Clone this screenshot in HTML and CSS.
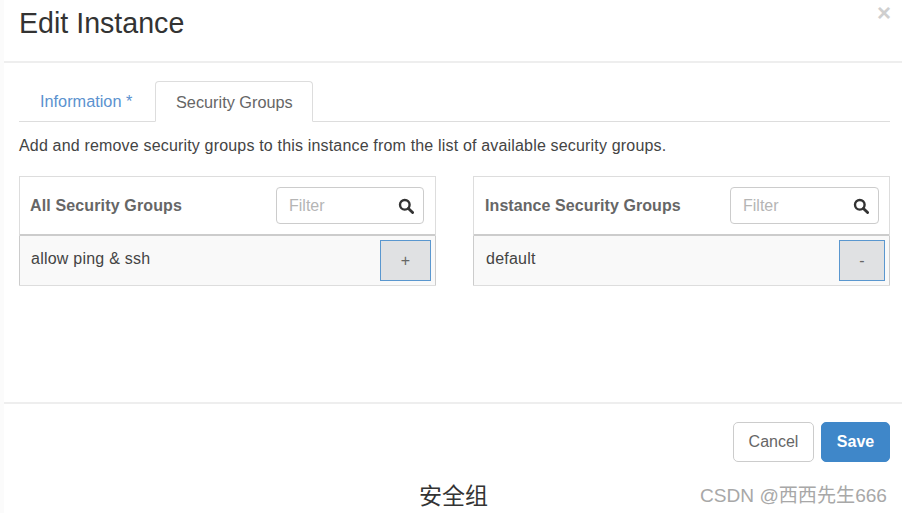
FILE: index.html
```html
<!DOCTYPE html>
<html lang="en">
<head>
<meta charset="utf-8">
<title>Edit Instance</title>
<link rel="stylesheet" href="styles.css">
</head>
<body>
<div class="modal">
  <header class="modal-header">
    <h1 class="title">Edit Instance</h1>
    <span class="close">×</span>
  </header>
  <div class="modal-body">
    <nav class="tabs">
      <a class="tab">Information *</a>
      <a class="tab tab-active">Security Groups</a>
    </nav>
    <p class="help">Add and remove security groups to this instance from the list of available security groups.</p>
    <div class="panels">
      <section class="panel panel-all">
        <div class="panel-head">
          <span class="panel-title">All Security Groups</span>
          <div class="filter">
            <span class="filter-text">Filter</span>
            <svg class="search" viewBox="0 0 16 16" width="16" height="16"><circle cx="6.8" cy="6.8" r="4.8" fill="none" stroke="#333" stroke-width="2.4"/><path d="M10.4 10.4 L14.6 14.6" stroke="#333" stroke-width="2.8" stroke-linecap="round"/></svg>
          </div>
        </div>
        <div class="panel-row">
          <span class="row-label">allow ping &amp; ssh</span>
          <span class="row-btn row-btn-add">+</span>
        </div>
      </section>
      <section class="panel panel-instance">
        <div class="panel-head">
          <span class="panel-title">Instance Security Groups</span>
          <div class="filter">
            <span class="filter-text">Filter</span>
            <svg class="search" viewBox="0 0 16 16" width="16" height="16"><circle cx="6.8" cy="6.8" r="4.8" fill="none" stroke="#333" stroke-width="2.4"/><path d="M10.4 10.4 L14.6 14.6" stroke="#333" stroke-width="2.8" stroke-linecap="round"/></svg>
          </div>
        </div>
        <div class="panel-row">
          <span class="row-label">default</span>
          <span class="row-btn row-btn-remove">-</span>
        </div>
      </section>
    </div>
  </div>
  <footer class="modal-footer">
    <button class="btn btn-cancel">Cancel</button>
    <button class="btn btn-save">Save</button>
  </footer>
</div>
<div class="caption-bar">
  <span class="caption">安全组</span>
  <span class="watermark">CSDN @西西先生666</span>
</div>
</body>
</html>
```
FILE: styles.css
```css
* { box-sizing: border-box; }
html, body { margin: 0; padding: 0; }
body {
  width: 902px;
  height: 513px;
  overflow: hidden;
  background: #fbfbfb;
  font-family: "Liberation Sans", Arial, "Noto Sans CJK SC", sans-serif;
  color: #333;
  display: flex;
  flex-direction: column;
}
.modal {
  height: 463px;
  margin-left: 4px;
  background: #fff;
  display: flex;
  flex-direction: column;
}
.modal-header {
  height: 63px;
  flex: none;
  border-bottom: 2px solid #eee;
  display: flex;
  justify-content: space-between;
  align-items: flex-start;
  padding: 5px 11px 0 15px;
}
.title {
  margin: 0;
  font-size: 28.6px;
  font-weight: 400;
  line-height: 36px;
  color: #333;
}
.close {
  font-size: 24px;
  font-weight: 700;
  line-height: 16px;
  color: #cfcfcf;
}
.modal-body {
  flex: 1;
  padding: 18px 12px 0 15px;
}
.tabs {
  display: flex;
  height: 41px;
  border-bottom: 1px solid #ddd;
}
.tab {
  font-size: 16.3px;
  line-height: 20px;
  padding: 10px 0 0 21px;
  width: 136px;
  color: #5b92cf;
}
.tab-active {
  width: 158px;
  height: 41px;
  padding-left: 20px;
  color: #666;
  background: #fff;
  border: 1px solid #ddd;
  border-bottom-color: #fff;
  border-radius: 4px 4px 0 0;
}
.help {
  margin: 14px 0 0;
  font-size: 16px;
  line-height: 19px;
  letter-spacing: 0.175px;
  color: #444;
}
.panels {
  margin-top: 21px;
  display: flex;
  gap: 37px;
}
.panel {
  width: 417px;
  height: 110px;
  border: 1px solid #ddd;
  display: flex;
  flex-direction: column;
}
.panel-head {
  height: 59px;
  flex: none;
  border-bottom: 2px solid #ccc;
  display: flex;
  justify-content: space-between;
  align-items: center;
  padding: 0 11px 0 10px;
}
.panel-instance .panel-head {
  padding: 0 10px 0 11px;
}
.panel-title {
  font-size: 16px;
  font-weight: 700;
  letter-spacing: 0.14px;
  color: #666;
}
.panel-instance .panel-title {
  letter-spacing: 0.08px;
}
.filter {
  width: 149px;
  height: 37px;
  border: 1px solid #ccc;
  border-radius: 4px;
  display: flex;
  justify-content: space-between;
  align-items: center;
  padding: 0 9px 0 12px;
}
.panel-all .filter {
  width: 148px;
}
.filter-text {
  font-size: 16px;
  color: #b5b5b5;
}
.search { flex: none; margin-top: 1px; }
.panel-row {
  flex: 1;
  margin: 0 -1px;
  background: #f9f9f9;
  border-left: 1px solid #ccc;
  border-right: 1px solid #ccc;
  display: flex;
  justify-content: space-between;
  align-items: center;
  padding: 0 4px 0 11px;
}
.panel-instance .panel-row {
  padding-left: 12px;
}
.row-label {
  font-size: 16px;
  letter-spacing: 0.23px;
  color: #444;
  margin-top: -3px;
}
.row-btn {
  height: 41px;
  background: #e0e1e3;
  border: 1px solid #5a97cf;
  color: #666;
  font-size: 16px;
  display: flex;
  justify-content: center;
  align-items: center;
}
.row-btn-add { width: 51px; }
.row-btn-remove { width: 46px; }
.modal-footer {
  height: 61px;
  flex: none;
  border-top: 2px solid #eee;
  display: flex;
  justify-content: flex-end;
  gap: 7px;
  padding: 18px 12px 0 0;
}
.btn {
  height: 40px;
  font-family: inherit;
  font-size: 16px;
  border-radius: 5px;
  padding: 0;
}
.btn-cancel {
  width: 81px;
  color: #666;
  background: #fff;
  border: 1px solid #ccc;
}
.btn-save {
  width: 69px;
  color: #fff;
  font-weight: 700;
  background: #3f87c9;
  border: 1px solid #3f87c9;
}
.caption-bar {
  flex: 1;
  margin-left: 4px;
  background: #fff;
  display: flex;
  align-items: flex-start;
  padding: 19px 15px 0 415px;
  justify-content: space-between;
}
.caption {
  font-size: 23px;
  line-height: 28px;
  color: #333;
}
.watermark {
  font-size: 19.1px;
  line-height: 26px;
  color: #a8a8a8;
  margin-top: 1px;
}
```
